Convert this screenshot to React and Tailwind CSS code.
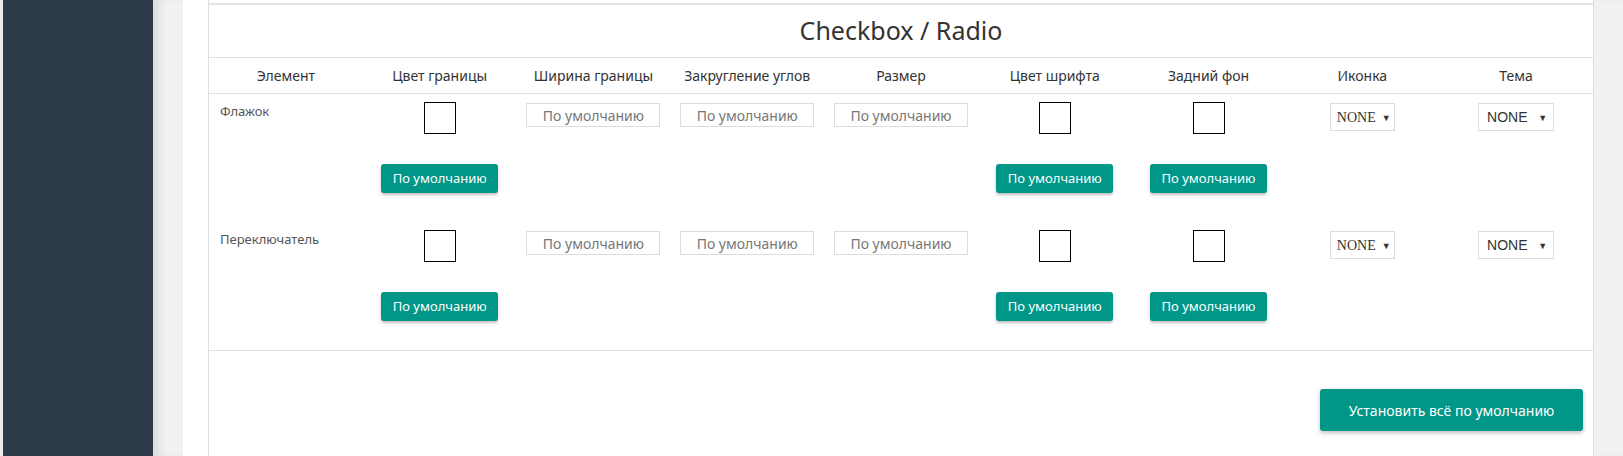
import React from "react";

const font = { fontFamily: '"Noto Sans", "Open Sans", sans-serif' };

const headers = [
  "Элемент",
  "Цвет границы",
  "Ширина границы",
  "Закругление углов",
  "Размер",
  "Цвет шрифта",
  "Задний фон",
  "Иконка",
  "Тема",
];

function Swatch() {
  return <div className="w-[32px] h-[32px] border-[1.5px] border-black bg-white" />;
}

function DefBtn() {
  return (
    <button className="w-[117px] h-[29px] rounded-[3px] bg-[#009688] text-white text-[13px] leading-none shadow-[0_2px_3px_rgba(0,0,0,0.25)]">
      По умолчанию
    </button>
  );
}

function TextInput() {
  return (
    <div className="w-[134px] h-[24px] border border-[#dcdcdc] flex items-center justify-center text-[14px] text-[#777]">
      По умолчанию
    </div>
  );
}

function IconSelect() {
  return (
    <div className="w-[65px] h-[28px] border border-[#dcdcdc] flex items-center pl-[6px] text-[#333]">
      <span className="text-[14px]" style={{ fontFamily: '"Liberation Serif", serif' }}>NONE</span>
      <span className="text-[9px] ml-[6px] mt-[1px]">▼</span>
    </div>
  );
}

function ThemeSelect() {
  return (
    <div className="w-[76px] h-[28px] border border-[#dcdcdc] flex items-center pl-[8px] pr-[6px] justify-between text-[#333]">
      <span className="text-[14px]" style={{ fontFamily: '"Liberation Sans", sans-serif' }}>NONE</span>
      <span className="text-[9px] mt-[1px]">▼</span>
    </div>
  );
}

function Row({ label }) {
  return (
    <div className="grid grid-cols-9 h-[128px]">
      <div className="pl-[11px] pt-[8px] text-[13px] text-[#555]">{label}</div>
      <div className="flex flex-col items-center pt-[8px]">
        <Swatch />
        <div className="mt-[30px]"><DefBtn /></div>
      </div>
      <div className="flex justify-center pt-[9px]"><TextInput /></div>
      <div className="flex justify-center pt-[9px]"><TextInput /></div>
      <div className="flex justify-center pt-[9px]"><TextInput /></div>
      <div className="flex flex-col items-center pt-[8px]">
        <Swatch />
        <div className="mt-[30px]"><DefBtn /></div>
      </div>
      <div className="flex flex-col items-center pt-[8px]">
        <Swatch />
        <div className="mt-[30px]"><DefBtn /></div>
      </div>
      <div className="flex justify-center pt-[9px]"><IconSelect /></div>
      <div className="flex justify-center pt-[9px]"><ThemeSelect /></div>
    </div>
  );
}

export default function App() {
  return (
    <div className="flex w-[1623px] h-[456px] overflow-hidden bg-[#f1f1f1]" style={font}>
      <div className="w-[3px] bg-[#ececec]" />
      <div className="w-[150px] bg-[#2c3a47]" />
      <div className="flex-1 flex shadow-[inset_10px_0_12px_-6px_rgba(0,0,0,0.12)] pl-[30px]">
        <div className="w-[1411px] bg-white pl-[25px] flex">
          <div className="w-[1386px] border-x border-[#dedede] flex flex-col">
            <div className="h-[3px]" />
            <div className="border-t-2 border-[#e4e4e4] h-[55px] border-b border-b-[#e2e2e2] flex items-center justify-center">
              <h1 className="text-[25px] text-[#333] leading-none mt-[-1px]">Checkbox / Radio</h1>
            </div>
            <div className="grid grid-cols-9 h-[36px] border-b border-[#e2e2e2] items-center text-[14px] text-[#333]">
              {headers.map((h) => (
                <div key={h} className="text-center">{h}</div>
              ))}
            </div>
            <Row label="Флажок" />
            <Row label="Переключатель" />
            <div className="border-t border-[#e2e2e2] flex justify-end pt-[38px] pr-[10px]">
              <button className="w-[263px] h-[42px] rounded-[3px] bg-[#009688] text-white text-[14px] shadow-[0_2px_4px_rgba(0,0,0,0.25)]">
                Установить всё по умолчанию
              </button>
            </div>
          </div>
        </div>
      </div>
    </div>
  );
}
